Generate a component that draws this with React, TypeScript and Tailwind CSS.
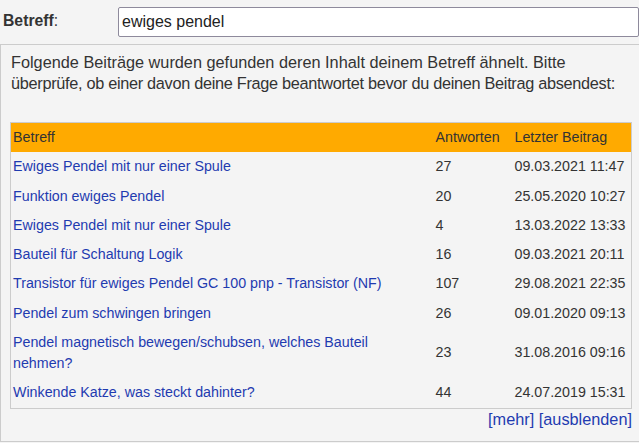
const ROWS: { title: string; answers: number; last: string }[] = [
  { title: "Ewiges Pendel mit nur einer Spule", answers: 27, last: "09.03.2021 11:47" },
  { title: "Funktion ewiges Pendel", answers: 20, last: "25.05.2020 10:27" },
  { title: "Ewiges Pendel mit nur einer Spule", answers: 4, last: "13.03.2022 13:33" },
  { title: "Bauteil für Schaltung Logik", answers: 16, last: "09.03.2021 20:11" },
  { title: "Transistor für ewiges Pendel GC 100 pnp - Transistor (NF)", answers: 107, last: "29.08.2021 22:35" },
  { title: "Pendel zum schwingen bringen", answers: 26, last: "09.01.2020 09:13" },
  { title: "Pendel magnetisch bewegen/schubsen, welches Bauteil nehmen?", answers: 23, last: "31.08.2016 09:16" },
  { title: "Winkende Katze, was steckt dahinter?", answers: 44, last: "24.07.2019 15:31" },
];

export default function App() {
  return (
    <div className="w-[639px] h-[443px] overflow-hidden bg-[#f4f4f4] text-[#333]" style={{ fontFamily: '"Liberation Sans", Arial, sans-serif' }}>
      {/* Subject line */}
      <div className="flex items-center h-[44px] pl-[3px] pb-[3px]">
        <label className="w-[115px] text-[15.75px]">
          <span className="font-bold">Betreff</span>:
        </label>
        <input
          defaultValue="ewiges pendel"
          className="flex-1 h-[30px] mt-[2px] bg-white border border-[#8e8a9c] rounded-[2px] px-[3px] text-[16px] text-[#222] outline-none"
        />
      </div>

      {/* Similar posts */}
      <div className="border border-[#cccccc] border-r-0 h-[398px] pt-[7px] pl-[9px] pr-[8px] text-[16.3px] leading-[21px]">
        <p className="pl-[1px] whitespace-nowrap">
          Folgende Beiträge wurden gefunden deren Inhalt deinem Betreff ähnelt. Bitte
          <br />
          <span className="tracking-[-0.3px]">überprüfe, ob einer davon deine Frage beantwortet bevor du deinen Beitrag absendest:</span>
        </p>

        <table className="mt-[28px] w-[622px] border border-[#cccccc] border-collapse text-[14.25px] leading-[21.25px]">
          <thead>
            <tr className="bg-[#ffaa00] text-left">
              <th className="font-normal px-[2px] py-[4px]">Betreff</th>
              <th className="font-normal px-[4px] py-[4px] w-[79px]">Antworten</th>
              <th className="font-normal px-[4px] py-[4px] w-[121px]">Letzter Beitrag</th>
            </tr>
          </thead>
          <tbody>
            {ROWS.map((r, i) => (
              <tr key={i} className="align-middle">
                <td className="px-[2px] py-[4px]">
                  <a href="#" className="text-[#1f3bb0]">{r.title}</a>
                </td>
                <td className="px-[4px] py-[4px]">{r.answers}</td>
                <td className="px-[4px] py-[4px] whitespace-nowrap">{r.last}</td>
              </tr>
            ))}
          </tbody>
        </table>

        <div className="w-[622px] text-right text-[#1f3bb0]">
          <a href="#">[mehr]</a> <a href="#">[ausblenden]</a>
        </div>
      </div>
    </div>
  );
}
